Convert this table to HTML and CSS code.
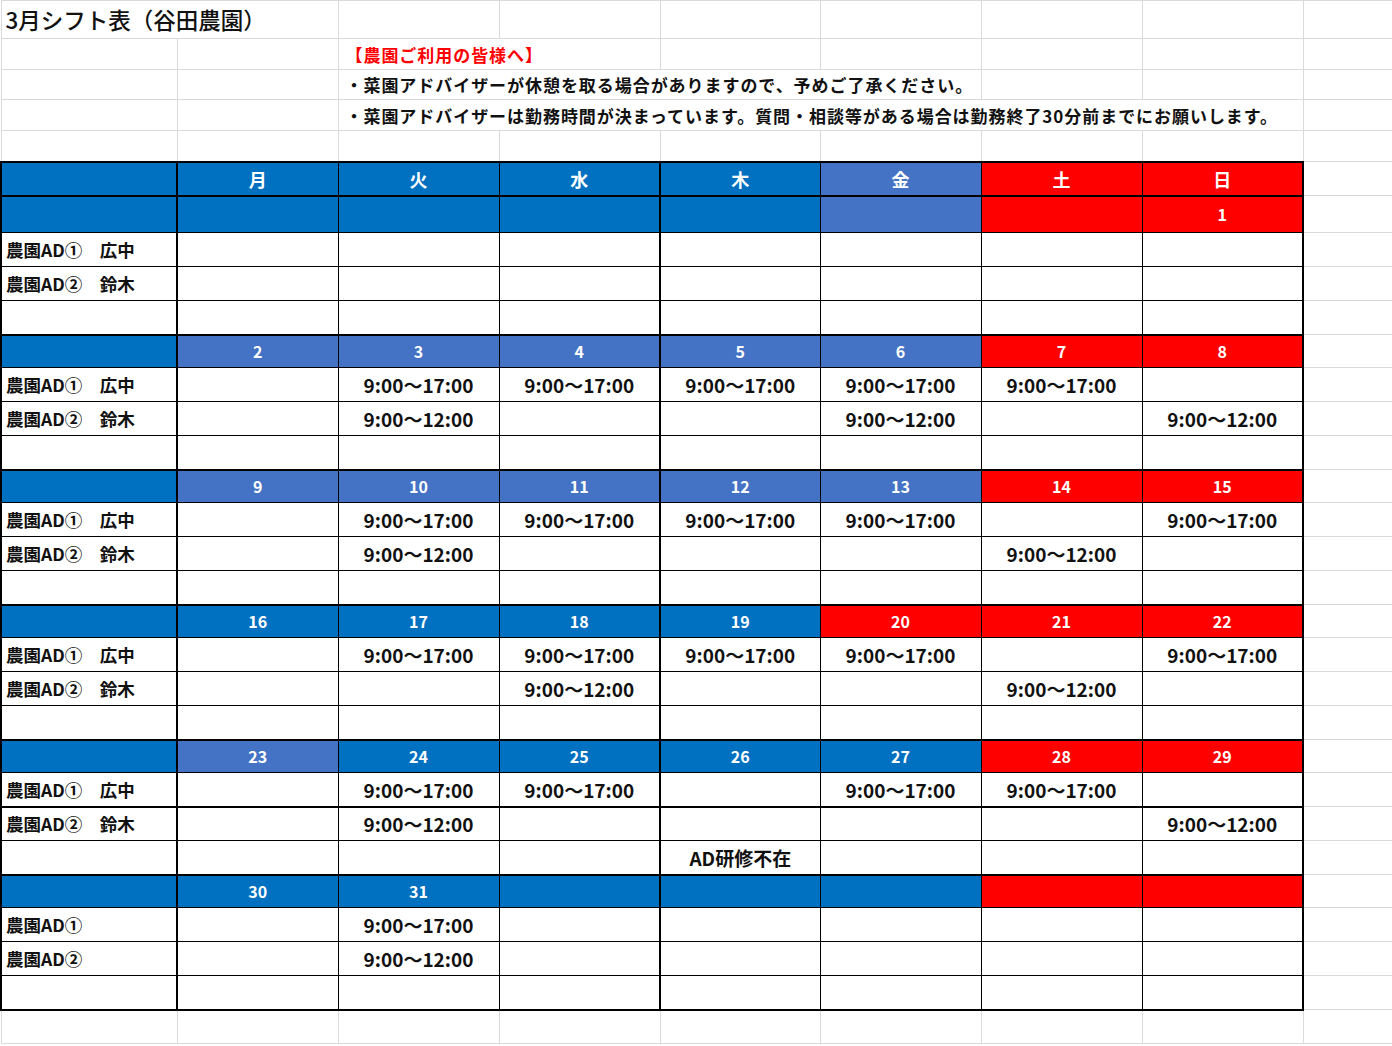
FILE: index.html
```html
<!DOCTYPE HTML>
<html>
    <head>
        <title>3月シフト表</title>
        <meta http-equiv="Content-Type" content="text/html; charset=UTF-8">
        <link rel="stylesheet" href="styles.css">
    </head>
    <body>
        <table class="sheet">
            <colgroup>
                <col class="c-a"><col class="c-d"><col class="c-d"><col class="c-d"><col class="c-e">
                <col class="c-d"><col class="c-d"><col class="c-d"><col class="c-i">
            </colgroup>
            <tr class="r-title">
                <td colspan="2" class="title">3月シフト表（谷田農園）</td>
                <td></td><td></td><td></td><td></td><td></td><td></td><td></td>
            </tr>
            <tr class="r-note">
                <td></td><td></td>
                <td colspan="2" class="note red">【農園ご利用の皆様へ】</td>
                <td></td><td></td><td></td><td></td><td></td>
            </tr>
            <tr class="r-note short">
                <td></td><td></td>
                <td colspan="4" class="note">・菜園アドバイザーが休憩を取る場合がありますので、予めご了承ください。</td>
                <td></td><td></td><td></td>
            </tr>
            <tr class="r-note">
                <td></td><td></td>
                <td colspan="6" class="note">・菜園アドバイザーは勤務時間が決まっています。質問・相談等がある場合は勤務終了30分前までにお願いします。</td>
                <td></td>
            </tr>
            <tr class="r-note">
                <td></td><td></td><td></td><td></td><td></td><td></td><td></td><td></td><td></td>
            </tr>

            <!-- 曜日 -->
            <tr class="cal days">
                <td class="dk"></td><td class="dk">月</td><td class="dk">火</td><td class="dk">水</td>
                <td class="dk">木</td><td class="lt">金</td><td class="rd">土</td><td class="rd">日</td>
                <td class="out"></td>
            </tr>
            <tr class="cal first">
                <td class="dk"></td><td class="dk"></td><td class="dk"></td><td class="dk"></td>
                <td class="dk"></td><td class="lt"></td><td class="rd"></td><td class="rd">1</td>
                <td class="out"></td>
            </tr>
            <tr class="cal slot">
                <td class="nm">農園AD①　広中</td><td></td><td></td><td></td><td></td><td></td><td></td><td></td><td class="out"></td>
            </tr>
            <tr class="cal slot">
                <td class="nm">農園AD②　鈴木</td><td></td><td></td><td></td><td></td><td></td><td></td><td></td><td class="out"></td>
            </tr>
            <tr class="cal slot">
                <td></td><td></td><td></td><td></td><td></td><td></td><td></td><td></td><td class="out"></td>
            </tr>

            <!-- 2-8 -->
            <tr class="cal date">
                <td class="dk"></td><td class="lt">2</td><td class="lt">3</td><td class="lt">4</td>
                <td class="lt">5</td><td class="lt">6</td><td class="rd">7</td><td class="rd">8</td>
                <td class="out"></td>
            </tr>
            <tr class="cal slot">
                <td class="nm">農園AD①　広中</td><td></td><td>9:00～17:00</td><td>9:00～17:00</td>
                <td>9:00～17:00</td><td>9:00～17:00</td><td>9:00～17:00</td><td></td><td class="out"></td>
            </tr>
            <tr class="cal slot">
                <td class="nm">農園AD②　鈴木</td><td></td><td>9:00～12:00</td><td></td>
                <td></td><td>9:00～12:00</td><td></td><td>9:00～12:00</td><td class="out"></td>
            </tr>
            <tr class="cal slot">
                <td></td><td></td><td></td><td></td><td></td><td></td><td></td><td></td><td class="out"></td>
            </tr>

            <!-- 9-15 -->
            <tr class="cal date">
                <td class="dk"></td><td class="lt">9</td><td class="lt">10</td><td class="lt">11</td>
                <td class="lt">12</td><td class="lt">13</td><td class="rd">14</td><td class="rd">15</td>
                <td class="out"></td>
            </tr>
            <tr class="cal slot">
                <td class="nm">農園AD①　広中</td><td></td><td>9:00～17:00</td><td>9:00～17:00</td>
                <td>9:00～17:00</td><td>9:00～17:00</td><td></td><td>9:00～17:00</td><td class="out"></td>
            </tr>
            <tr class="cal slot">
                <td class="nm">農園AD②　鈴木</td><td></td><td>9:00～12:00</td><td></td>
                <td></td><td></td><td>9:00～12:00</td><td></td><td class="out"></td>
            </tr>
            <tr class="cal slot">
                <td></td><td></td><td></td><td></td><td></td><td></td><td></td><td></td><td class="out"></td>
            </tr>

            <!-- 16-22 -->
            <tr class="cal date">
                <td class="dk"></td><td class="dk">16</td><td class="dk">17</td><td class="dk">18</td>
                <td class="dk">19</td><td class="rd">20</td><td class="rd">21</td><td class="rd">22</td>
                <td class="out"></td>
            </tr>
            <tr class="cal slot">
                <td class="nm">農園AD①　広中</td><td></td><td>9:00～17:00</td><td>9:00～17:00</td>
                <td>9:00～17:00</td><td>9:00～17:00</td><td></td><td>9:00～17:00</td><td class="out"></td>
            </tr>
            <tr class="cal slot">
                <td class="nm">農園AD②　鈴木</td><td></td><td></td><td>9:00～12:00</td>
                <td></td><td></td><td>9:00～12:00</td><td></td><td class="out"></td>
            </tr>
            <tr class="cal slot">
                <td></td><td></td><td></td><td></td><td></td><td></td><td></td><td></td><td class="out"></td>
            </tr>

            <!-- 23-29 -->
            <tr class="cal date">
                <td class="dk"></td><td class="lt">23</td><td class="dk">24</td><td class="dk">25</td>
                <td class="dk">26</td><td class="dk">27</td><td class="rd">28</td><td class="rd">29</td>
                <td class="out"></td>
            </tr>
            <tr class="cal slot">
                <td class="nm">農園AD①　広中</td><td></td><td>9:00～17:00</td><td>9:00～17:00</td>
                <td></td><td>9:00～17:00</td><td>9:00～17:00</td><td></td><td class="out"></td>
            </tr>
            <tr class="cal slot heavy">
                <td class="nm">農園AD②　鈴木</td><td></td><td>9:00～12:00</td><td></td>
                <td></td><td></td><td></td><td>9:00～12:00</td><td class="out"></td>
            </tr>
            <tr class="cal slot">
                <td></td><td></td><td></td><td></td><td>AD研修不在</td><td></td><td></td><td></td><td class="out"></td>
            </tr>

            <!-- 30-31 -->
            <tr class="cal date">
                <td class="dk"></td><td class="dk">30</td><td class="dk">31</td><td class="dk"></td>
                <td class="dk"></td><td class="dk"></td><td class="rd"></td><td class="rd"></td>
                <td class="out"></td>
            </tr>
            <tr class="cal slot">
                <td class="nm">農園AD①</td><td></td><td>9:00～17:00</td><td></td>
                <td></td><td></td><td></td><td></td><td class="out"></td>
            </tr>
            <tr class="cal slot">
                <td class="nm">農園AD②</td><td></td><td>9:00～12:00</td><td></td>
                <td></td><td></td><td></td><td></td><td class="out"></td>
            </tr>
            <tr class="cal slot last">
                <td></td><td></td><td></td><td></td><td></td><td></td><td></td><td></td><td class="out"></td>
            </tr>

            <tr class="r-tail">
                <td></td><td></td><td></td><td></td><td></td><td></td><td></td><td></td><td></td>
            </tr>
        </table>
    </body>
</html>
```

FILE: styles.css
```css
body{
    margin: 0;
    background: #fff;
    color: #000;
    font-family: "Noto Sans CJK JP", "Noto Sans", sans-serif;
}
.sheet{
    border-collapse: collapse;
    table-layout: fixed;
    width: 1392px;
}
.sheet .c-a{ width: 176px; }
.sheet .c-d{ width: 161px; }
.sheet .c-e{ width: 160px; }
.sheet .c-i{ width: 90px; }
.sheet td{
    border: 1px solid #dadada;
    padding: 0 4px;
    white-space: nowrap;
    vertical-align: middle;
    line-height: 1;
    text-align: center;
    font-size: 19px;
    font-weight: 700;
    color: #111;
}
.r-title{ height: 38px; }
.r-note{ height: 31px; }
.r-note.short{ height: 30px; }
.r-tail{ height: 34px; }
.title{
    text-align: left !important;
    font-size: 22.5px !important;
    font-weight: 500 !important;
}
.note{
    text-align: left !important;
    padding-left: 7px !important;
    font-size: 17px !important;
    letter-spacing: 0.95px;
}
.sheet td.red{
    color: #ff0000;
}

/* カレンダー部分 */
.cal td{
    border: 1px solid #000;
}
.cal td.out{
    border: 1px solid #dadada;
}
.cal td:first-child,
.cal td:nth-child(2),
.cal td:nth-child(5){
    border-left-width: 2px;
}
.cal td:nth-child(8){
    border-right-width: 2px;
}
.days{ height: 34px; }
.days td:not(.out){
    border-top-width: 2px;
    border-bottom-width: 2px;
    font-size: 18px;
}
.first{ height: 37px; }
.date{ height: 33px; }
.date td:not(.out){
    border-top-width: 2px;
}
.slot{ height: 34px; }
.heavy td:not(.out){
    border-top-width: 2px;
}
.last td:not(.out){
    border-bottom-width: 2px;
}
.first td, .date td{
    font-size: 16px;
}
.sheet .dk{
    background: #0070c0;
    color: #fff;
}
.sheet .lt{
    background: #4472c4;
    color: #fff;
}
.sheet .rd{
    background: #ff0000;
    color: #fff;
}
.nm{
    text-align: left !important;
    font-size: 17.5px !important;
}
```
